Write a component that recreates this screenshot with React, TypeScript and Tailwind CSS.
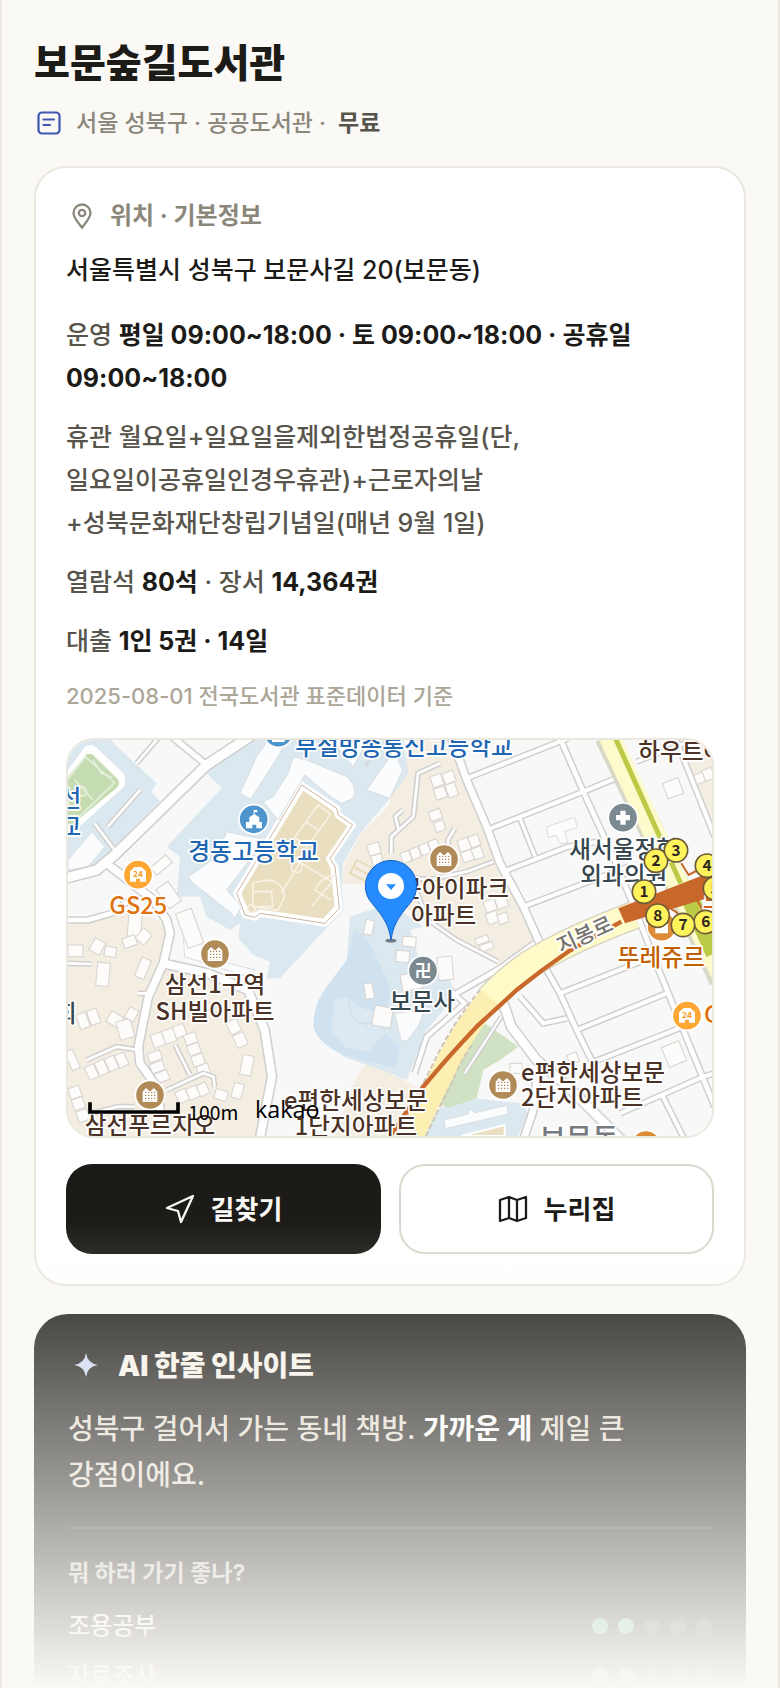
import React from 'react';

type Point = [number, number];

// Roads: [points, width]
const roads: Array<[string, number]> = [
	['300,-20 416,75', 16],
	['560,-20 416,75 140,345 86,390 -10,415', 28],
	['206,70 270,-5', 8],
	['216,150 120,260', 8],
	['80,250 140,330', 8],
	['-10,540 60,540 130,520 200,470', 14],
	['116,370 256,480 296,540 306,580 286,670 241,770 211,920 216,970 266,1040 290,1200', 22],
	['286,670 420,700 540,750 590,870 612,1010 575,1200', 24],
	['210,760 240,760', 8],
	['211,930 146,920 56,960', 8],
	['296,1050 406,1000 436,1010 440,1040', 8],
	['321,915 366,1005', 8],
	['0,670 70,672', 8],
	['70,1120 150,1100 200,1100', 8],
	['1196,115 1500,-5', 12],
	['1256,270 1546,155 1656,110', 12],
	['1356,235 1401,350', 10],
	['1306,395 1500,320 1620,300', 12],
	['1366,500 1680,380', 12],
	['1706,65 1850,10', 10],
	['1816,-20 1940,290', 12],
	['1150,-10 1196,120 1256,260 1296,370 1366,500 1420,620', 20],
	['1474,-10 1546,155 1640,360 1706,520 1756,650 1850,880 1940,1100', 14],
	['1116,70 1050,100 1036,230 970,290 970,340', 8],
	['992,270 982,230 1004,210', 8],
	['1160,265 1140,300 1140,340', 8],
	['966,400 1080,420 1196,395 1276,365', 8],
	['1040,440 1080,540 1166,600 1290,665', 8],
	['1146,750 1190,790 1076,890 1040,1000', 12],
	['1140,775 1296,685 1400,610', 14],
	['1436,690 1476,760 1526,870 1580,980', 14],
	['1476,760 1756,650', 12],
	['1526,870 1796,760', 12],
	['1566,970 1846,860', 12],
	['1356,770 1426,850 1496,835', 12],
	['1306,790 1330,860 1406,960 1500,1040 1660,1200', 26],
	['1656,1120 1906,1010 1940,1000', 12],
	['1780,1060 1850,1200', 12],
	['1366,1200 1396,1110 1406,1020', 20],
	['1190,1000 1300,830', 6],
];

// Buildings: x, y, width, height, rotation
const buildings: Array<[number, number, number, number, number]> = [
	[200, 370, 40, 60, -40], [250, 360, 60, 30, -40], [280, 430, 44, 70, -35],
	[180, 520, 40, 70, 5], [340, 510, 50, 110, -20],
	[0, 615, 45, 35, 0], [70, 600, 36, 40, 30], [110, 620, 34, 30, 10], [86, 668, 38, 70, 5],
	[165, 590, 40, 30, -20], [210, 570, 34, 40, 40], [210, 655, 30, 60, 22],
	[30, 820, 30, 45, -20], [62, 808, 30, 45, -20], [120, 820, 40, 36, 30], [150, 840, 44, 56, -15], [176, 805, 30, 36, 30],
	[252, 880, 36, 40, -20], [286, 868, 36, 40, -20], [318, 855, 34, 36, -20],
	[350, 880, 36, 32, -20], [360, 912, 36, 32, -20], [372, 944, 36, 32, -20], [388, 974, 36, 32, -20],
	[240, 935, 40, 28, -20], [248, 966, 40, 30, -20], [262, 995, 40, 30, -20],
	[56, 975, 30, 42, -25], [86, 962, 30, 42, -25], [116, 950, 30, 42, -25], [146, 940, 30, 40, -25],
	[0, 930, 26, 60, -25], [4, 1040, 34, 34, -20], [14, 1074, 34, 34, -20], [28, 1110, 34, 34, -20],
	[326, 1050, 34, 36, -25], [358, 1040, 34, 36, -25], [390, 1030, 30, 36, -25], [440, 1050, 38, 30, 20], [494, 1030, 30, 45, 15],
	[480, 840, 34, 40, -25], [500, 880, 34, 40, -25], [520, 946, 34, 60, 10],
	[1090, 105, 34, 34, -20], [1126, 95, 34, 34, -20], [1100, 142, 34, 34, -20], [1136, 130, 30, 40, -20],
	[1084, 210, 36, 30, -20], [1100, 244, 30, 30, -20],
	[1000, 335, 28, 32, -20], [1028, 324, 28, 32, -20], [1056, 312, 28, 32, -20], [1084, 300, 28, 32, -20],
	[1172, 296, 34, 36, -20], [1204, 286, 30, 34, -20], [1182, 332, 34, 32, -20], [1214, 322, 30, 34, -20],
	[1250, 480, 34, 34, -20], [1284, 470, 34, 34, -20], [1256, 516, 34, 34, -20], [1290, 520, 30, 30, -20],
	[1790, 120, 50, 50, -20], [1880, 100, 30, 30, -20], [1906, 86, 30, 34, -20],
	[900, 310, 36, 34, -15], [912, 344, 32, 34, -15], [1222, 590, 40, 20, -20], [1236, 610, 40, 20, -20],
	[890, 540, 26, 44, 12], [890, 730, 26, 46, -10], [916, 800, 56, 60, 10],
	[1004, 590, 40, 30, 5], [984, 632, 40, 34, 5], [1110, 650, 44, 70, -5], [1000, 700, 60, 50, -10],
	[1790, 910, 56, 64, -22], [1500, 940, 30, 30, -20], [1326, 970, 36, 30, 0],
];

const apartments: Point[] = [[1128, 357], [441, 642], [246, 1065], [1305, 1035]];

const exits: Array<[number, number, string]> = [
	[1941, 445, '5'], [1917, 377, '4'], [1764, 362, '2'], [1824, 331, '3'],
	[1728, 455, '1'], [1769, 527, '8'], [1913, 546, '6'], [1845, 555, '7'],
];

// Place names: x, baseline, text, colour, anchor
const labels: Array<[number, number, string, string, 'start' | 'middle' | 'end']> = [
	[1008, 46, '부설방송통신고등학교', '#1f66b3', 'middle'],
	[557, 359, '경동고등학교', '#1f66b3', 'middle'],
	[40, 200, '삼선', '#1f66b3', 'end'],
	[40, 286, '학교', '#1f66b3', 'end'],
	[211, 523, 'GS25', '#e0720f', 'middle'],
	[1127, 472, '보문아이파크', '#4b3226', 'middle'],
	[1127, 551, '아파트', '#4b3226', 'middle'],
	[1667, 354, '새서울정형', '#37474f', 'middle'],
	[1667, 431, '외과의원', '#37474f', 'middle'],
	[1711, 60, '하우트아', '#4b3226', 'start'],
	[1780, 677, '뚜레쥬르', '#c25f00', 'middle'],
	[1063, 811, '보문사', '#37474f', 'middle'],
	[441, 759, '삼선1구역', '#4b3226', 'middle'],
	[441, 839, 'SH빌아파트', '#4b3226', 'middle'],
	[246, 1181, '삼선푸르지오', '#4b3226', 'middle'],
	[864, 1107, 'e편한세상보문', '#4b3226', 'middle'],
	[864, 1184, '1단지아파트', '#4b3226', 'middle'],
	[1359, 1022, 'e편한세상보문', '#4b3226', 'start'],
	[1359, 1099, '2단지아파트', '#4b3226', 'start'],
	[26, 846, '교회', '#37474f', 'end'],
	[1908, 850, 'GS', '#e0720f', 'start'],
	[1904, 505, '보문', '#d2622a', 'start'],
];

const LibraryMap: React.FC = () => (
	<svg viewBox="0 0 1932 1188" preserveAspectRatio="xMidYMid slice" className="block h-full w-full font-['Noto_Sans_CJK_KR',sans-serif]" role="img" aria-label="보문숲길도서관 지도">
		<rect width="1932" height="1188" fill="#f8f8f8" />

		{/* residential blocks */}
		<g fill="#f3ede2">
			<path d="M0 545L60 545L200 500L300 560L300 690L420 700L540 750L590 870L612 1010L575 1188H0Z" />
			<path d="M1026 0H1160L1276 350L1406 610L1296 680L1166 600L1066 540L966 470V440L821 430L830 370L880 280L960 200Z" />
			<path d="M896 965L1026 1030L1066 1060V1188H800L861 1020Z" />
			<path d="M1836 0H1932V290Z" />
		</g>

		{/* school grounds */}
		<g fill="#dbe8f0">
			<path d="M0 0H126L266 130L250 155L276 182L140 320L76 390L0 400Z" />
			<path d="M416 100L536 0H1006L1021 100L966 175L876 280L826 370L821 430L826 510L636 715H596L606 665L556 645L511 595L516 550L486 570L416 530L396 470L326 470L336 350L296 320L461 145Z" />
			<path d="M846 530L966 490L1066 560L1026 570L1051 650L1136 680L1161 770L1076 870L1016 1020L966 1000L826 950L736 860L776 760L836 660Z" />
			<path d="M1110 1110L1170 1070L1360 1090L1380 1120L1350 1188H1050Z" />
		</g>
		<path d="M861 570L836 660L776 740Q736 790 736 860Q750 910 826 945L900 965L985 985L996 920L950 880L966 740L900 600Z" fill="#d0e2ef" />
		<path d="M800 780L840 770L870 800L930 820L950 880L900 935L830 920L790 870Z" fill="#dce9f2" />
		<g fill="none" stroke="#c9dcea" strokeWidth="3">
			<path d="M840 770L850 830L900 860M870 850L930 850" />
		</g>

		{/* sports ground */}
		<path d="M0 90L50 22Q66 8 84 22L166 100Q176 116 168 140L0 290Z" fill="#fff" />
		<path d="M0 110L56 42H72L148 116Q158 126 148 142L0 264Z" fill="#c5dcb2" />
		<g fill="none" stroke="#e4f0da" strokeWidth="5">
			<path d="M0 118L52 50L140 128L20 244M20 120L75 180M75 62L100 100L132 112" />
			<circle cx="42" cy="154" r="14" />
		</g>
		<path d="M1236 840L1351 920L1296 960L1246 990L1226 1075L1140 1104L1050 1050L1130 960Z" fill="#d0e2c3" />

		{/* school playing field */}
		<path d="M701 135L806 205L811 225L854 255L786 355L801 380L814 505L771 550L576 520L561 532L531 525L506 460Z" fill="#e9dec0" stroke="#fff" strokeWidth="20" strokeLinejoin="round" />
		<path d="M701 135L806 205L811 225L854 255L786 355L801 380L814 505L771 550L576 520L561 532L531 525L506 460Z" fill="#fff" stroke="#cdb5a2" strokeWidth="3" />
		<path d="M706 152L796 214L802 232L839 259L773 355L787 384L800 499L765 536L574 508L560 518L542 514L520 460Z" fill="#e9dec0" />
		<g fill="none" stroke="#f7f2e3" strokeWidth="5">
			<path d="M750 195L788 222L718 320L680 292ZM715 246L752 272" />
			<path d="M625 325L792 425L730 500M700 360L640 460" />
			<circle cx="686" cy="382" r="16" />
			<path d="M555 500V430Q640 400 650 470L630 510ZM555 455L610 455L615 500L560 500" />
			<circle cx="550" cy="506" r="12" />
			<path d="M803 405Q760 410 740 450L790 480" />
		</g>
		<g fill="none" stroke="#e5d9b6" strokeWidth="5">
			<path d="M866 360L915 385L895 425L846 400ZM856 380L905 405" />
		</g>

		{/* school buildings */}
		<g fill="#fbfcfe" stroke="#d9dde0" strokeWidth="3">
			<path d="M600 0L566 50L516 160L548 178L636 40L656 0Z" />
			<path d="M676 50L716 60L836 110Q870 140 856 175L820 190L790 172L711 105L630 240L586 185L616 170L660 100Z" />
			<path d="M580 296L522 285L476 275L446 350L361 410L376 430L490 520L500 535L521 500L476 450L560 340Z" />
			<path d="M790 0L856 80L900 0Z" />
			<path d="M966 50L896 150L966 175L1004 90L985 50Z" />
			<path d="M0 360L71 275L111 320L60 380L0 390Z" />
			<path d="M891 80L920 40" strokeWidth="10" />
			<path d="M346 590L400 600L406 650L560 690L540 710L350 650Z" />
			<path d="M980 820L1070 810L1050 860L1020 900L1000 905Z" />
			<path d="M1128 1140L1200 1122L1205 1105L1220 1118L1316 1096L1322 1122L1132 1166Z" />
			<path d="M1436 260L1520 232L1528 262L1490 275L1500 308L1478 312L1464 285L1440 292Z" />
		</g>
		<path d="M1180 1188L1310 1155V1188Z" fill="#e9dec0" stroke="#fff" strokeWidth="6" />

		<g fill="#fdfcfb" stroke="#d6d3ce" strokeWidth="3">
			{buildings.map(([x, y, w, h, r], i) => (
				<rect key={i} x={x} y={y} width={w} height={h} transform={`rotate(${r} ${x + w / 2} ${y + h / 2})`} />
			))}
		</g>

		<g fill="none" strokeLinejoin="round">
			{roads.map(([points, w]) => <polyline key={points} points={points} stroke="#cfcfcf" strokeWidth={w + 9} />)}
			{roads.map(([points, w]) => <polyline key={points} points={points} stroke="#fefefe" strokeWidth={w} />)}
		</g>

		{/* main roads and subway lines */}
		<g fill="none">
			<path d="M1616 -10L1820 420L1960 720" stroke="#d9d9c8" strokeWidth="74" />
			<path d="M1624 -10L1824 420L1960 700" stroke="#fdfacb" strokeWidth="64" />
			<path d="M1640 -10L1838 430" stroke="#bccb47" strokeWidth="15" />
			<path d="M1846 430L1940 640" stroke="#bccb47" strokeWidth="54" />
			<path d="M1265 775Q1310 725 1380 675Q1500 600 1700 525" stroke="#d6d2c2" strokeWidth="86" />
			<path d="M1265 775Q1310 725 1380 675Q1500 600 1700 525" stroke="#fffbc9" strokeWidth="78" />
			<path d="M1026 1200Q1070 1100 1128 990Q1185 870 1267 773" stroke="#fdeeb2" strokeWidth="70" />
			<path d="M996 1180Q1040 1080 1096 970Q1150 855 1236 750M1064 1210Q1110 1110 1160 1010Q1185 950 1215 910" stroke="#cfc6b4" strokeWidth="6" strokeDasharray="16 8" />
			<path d="M966 1190L1066 1040Q1140 950 1226 860L1346 750Q1420 690 1500 635L1660 545" stroke="#c8682a" strokeWidth="13" />
		</g>
		<path d="M1651 505L1932 395V470L1671 550Z" fill="#c8672a" />
		<g fill="none" stroke="#c8672a" strokeWidth="6">
			<path d="M1840 370L1862 405L1890 390M1880 470L1905 510L1932 500M1800 500L1830 520" />
		</g>

		{/* place markers */}
		<g stroke="#fff" strokeWidth="5">
			<circle cx="557" cy="238" r="44" fill="#4f95cd" />
			<circle cx="631" cy="-22" r="44" fill="#4f95cd" />
			<circle cx="210" cy="404" r="44" fill="#ffa733" />
			<circle cx="1857" cy="827" r="44" fill="#ffa733" />
			<circle cx="1665" cy="233" r="44" fill="#7b8990" />
			<circle cx="1065" cy="692" r="44" fill="#7b8990" />
			<circle cx="1781" cy="560" r="44" fill="#dd8c38" />
			<circle cx="1734" cy="1215" r="44" fill="#dd8c38" />
			{apartments.map(([x, y]) => <circle key={x} cx={x} cy={y} r="44" fill="#b08b58" />)}
		</g>
		<g fill="#fff">
			<path d="M534 265V246H544V232L559 222L574 232V246H582V265H565V254H553V265ZM557 224V210H568V217H560V224Z" />
			<path d="M612 0H650V6H612Z" />
			<path d="M1657 212H1673V225H1686V241H1673V254H1657V241H1644V225H1657Z" />
			<path d="M1762 552H1800V580H1762Z" />
		</g>
		{apartments.map(([x, y]) => (
			<g key={x} transform={`translate(${x} ${y})`}>
				<path d="M-22 21V-10L-12 -21L-2 -12V-12H2L12 -21L22 -10V21Z" fill="#fff" />
				<path d="M-13 -10V18M-4 -10V18M5 -10V18M14 -10V18" stroke="#b08b58" strokeWidth="4" strokeDasharray="4 5" />
			</g>
		))}
		{([[210, 404], [1857, 827]] as Point[]).map(([x, y]) => (
			<g key={x} transform={`translate(${x} ${y})`}>
				<path d="M-24 21V-10L-10 -23H10L24 -10V21H6V12H-6V21Z" fill="#fff" />
				<text y="8" textAnchor="middle" fontSize="25" fontWeight="700" fill="#f39a20">24</text>
			</g>
		))}
		<text x="1065" y="711" fill="#fff" fontSize="50" fontWeight="700" textAnchor="middle">卍</text>

		<g fontSize="71" fontWeight="500" stroke="#fff" strokeWidth="10" strokeLinejoin="round" style={{ paintOrder: 'stroke' }}>
			{labels.map(([x, y, text, color, anchor]) => (
				<text key={`${x}-${y}`} x={x} y={y} fill={color} textAnchor={anchor}>{text}</text>
			))}
			<text x="1480" y="642" fill="#77736d" fontSize="64" transform="rotate(-25 1480 642)">지봉로</text>
			<text x="1533" y="1226" fill="#777b80" fontSize="86" textAnchor="middle">보문동</text>
		</g>

		{/* station exits */}
		{exits.map(([x, y, n]) => (
			<g key={n}>
				<circle cx={x} cy={y} r="35" fill="#fff35c" stroke="#6c5a38" strokeWidth="5" />
				<text x={x} y={y + 16} textAnchor="middle" fontSize="46" fontWeight="700" fill="#2b2620">{n}</text>
			</g>
		))}

		<ellipse cx="969" cy="602" rx="17" ry="6" fill="#6d7c86" />
		<path d="M969 600C962 556 950 535 912 490A77 77 0 1 1 1026 490C988 535 976 556 969 600Z" fill="#258bff" stroke="#1763c8" strokeWidth="3" />
		<circle cx="969" cy="438" r="39" fill="#fff" />
		<path d="M954 433H984L969 450Z" fill="#258bff" />

		<path d="M66 1087V1116H330V1087" fill="none" stroke="#000" strokeWidth="11" />
		<text x="361" y="1140" fontSize="58" fontFamily="Noto Sans CJK KR" fontWeight="400">100m</text>
		<text x="561" y="1134" fontSize="70" fontFamily="Open Sans" fontWeight="500">kakao</text>
	</svg>
);

const uses = [
	{ name: '조용공부', score: 2 },
	{ name: '자료조사', score: 2 },
];

const App: React.FC = () => {
	return (
		<main className="relative h-screen overflow-hidden border-x-2 border-[#ece9e2] bg-[#faf9f6] px-8 pt-8 font-[Inter,'Noto_Sans_CJK_KR',sans-serif] font-medium break-keep text-[#1c1b17]">
			<h1 className="text-[39px] leading-[62px] font-black">보문숲길도서관</h1>
			<p className="mt-2 flex h-[42px] items-center text-[23px] text-[#8b877b]">
				<svg viewBox="0 0 30 30" className="mr-3 size-[30px]" fill="none" stroke="#3f58ad" strokeWidth="2.2" strokeLinecap="round" aria-hidden="true">
					<rect x="4.500" y="4.500" width="21" height="21" rx="3.500" />
					<path d="M9.500 11.500H20M9.500 17H16" />
				</svg>
				<span>서울 성북구 · 공공도서관 ·</span>
				<strong className="ml-3 font-bold text-[#57544b]">무료</strong>
			</p>

			<section className="mt-[22px] rounded-[32px] border-2 border-[#ebe8e0] bg-white p-[30px]">
				<h2 className="flex h-9 items-center text-2xl font-bold text-[#8b877b]">
					<svg viewBox="0 0 32 32" className="mr-3 size-8" fill="none" stroke="currentColor" strokeWidth="2.300" aria-hidden="true">
						<path d="M16 27.500C13 23.500 7.500 18 7.500 13.000A8.500 8.500 0 0 1 24.500 13.000C24.500 18 19 23.500 16 27.500Z" />
						<circle cx="16" cy="13" r="3.200" />
					</svg>
					위치 · 기본정보
				</h2>
				<p className="mt-4 text-[25px] leading-10">서울특별시 성북구 보문사길 20(보문동)</p>
				<div className="text-[25px] leading-[43px] text-[#57544b]">
					<p className="mt-6">운영 <strong className="font-bold text-[#1c1b17]">평일 09:00~18:00 · 토 09:00~18:00 · 공휴일 09:00~18:00</strong></p>
					<p className="mt-4">휴관 월요일+일요일을제외한법정공휴일(단,<br />일요일이공휴일인경우휴관)+근로자의날<br />+성북문화재단창립기념일(매년 9월 1일)</p>
					<p className="mt-4">열람석 <strong className="font-bold text-[#1c1b17]">80석</strong> · 장서 <strong className="font-bold text-[#1c1b17]">14,364권</strong></p>
					<p className="mt-4">대출 <strong className="font-bold text-[#1c1b17]">1인 5권 · 14일</strong></p>
				</div>
				<p className="mt-[15px] text-[22px] leading-9 text-[#aba698]">2025-08-01 전국도서관 표준데이터 기준</p>

				<div className="mt-6 h-[400px] overflow-hidden rounded-[28px] border-2 border-[#ebe8e0]">
					<LibraryMap />
				</div>

				<div className="mt-[26px] grid grid-cols-2 gap-[18px] text-[26px] font-bold">
					<button type="button" className="flex h-[90px] items-center justify-center gap-4 rounded-[26px] bg-[#1c1b17] text-[#faf9f6]">
						<svg viewBox="0 0 30 30" className="size-[30px]" fill="none" stroke="currentColor" strokeWidth="2.300" strokeLinejoin="round" aria-hidden="true">
							<path d="M28 2L2 14L13 17L16 28Z" />
						</svg>
						길찾기
					</button>
					<button type="button" className="flex h-[90px] items-center justify-center gap-4 rounded-[26px] border-2 border-[#dcd8ce] bg-white">
						<svg viewBox="0 0 30 30" className="size-[30px]" fill="none" stroke="currentColor" strokeWidth="2.300" strokeLinejoin="round" aria-hidden="true">
							<path d="M2 6L11 3L19 6L28 3V24L19 27L11 24L2 27ZM11 3V24M19 6V27" />
						</svg>
						누리집
					</button>
				</div>
			</section>

			<section className="mt-7 rounded-[34px] bg-[#1c1b17] px-[34px] pt-8 pb-16 text-[#f5f2e8]">
				<h2 className="flex h-10 items-center gap-4 text-[28px] font-black">
					<svg viewBox="0 0 34 34" className="size-[34px]" fill="#cfd8f5" aria-hidden="true">
						<path d="M18 4Q19.500 14.500 30 16Q19.500 17.500 18 28Q16.500 17.500 6 16Q16.500 14.500 18 4Z" />
					</svg>
					AI 한줄 인사이트
				</h2>
				<p className="mt-5 text-[28px] leading-[46px] text-[#e2ddd0]">성북구 걸어서 가는 동네 책방. <strong className="font-bold text-white">가까운 게</strong> 제일 큰 강점이에요.</p>
				<hr className="mt-[29px] border-t-2 border-white/10" />
				<h3 className="mt-6 text-[23px] leading-10 font-bold text-[#c9c4b6]">뭐 하러 가기 좋나?</h3>
				<ul className="mt-2 text-2xl font-medium">
					{uses.map((u) => (
						<li key={u.name} className="flex h-[50px] items-center justify-between">
							{u.name}
							<span className="flex gap-[10px]" aria-label={`${u.score}/5`}>
								{[1, 2, 3, 4, 5].map((n) => (
									<span key={n} className={`size-4 rounded-full ${n <= u.score ? 'bg-[#5fb98e]' : 'bg-white/15'}`} />
								))}
							</span>
						</li>
					))}
				</ul>
			</section>

			{/* bottom fade */}
			<div className="pointer-events-none absolute inset-x-0 bottom-0 h-[468px] bg-linear-to-t from-[#faf9f6] to-[#faf9f6]/0" />
		</main>
	);
};

export default App;
